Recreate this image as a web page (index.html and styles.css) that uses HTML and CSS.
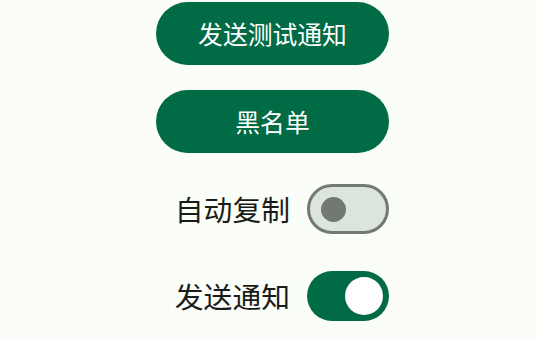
FILE: index.html
```html
<!DOCTYPE html>
<html lang="zh-CN">
<head>
<meta charset="utf-8">
<link rel="stylesheet" href="styles.css">
</head>
<body>
<div class="col">
  <button class="btn btn-first">发送测试通知</button>
  <button class="btn btn-second">黑名单</button>
  <div class="row row-first">
    <span class="label">自动复制</span>
    <span class="switch off"><span class="thumb"></span></span>
  </div>
  <div class="row row-second">
    <span class="label">发送通知</span>
    <span class="switch on"><span class="thumb"></span></span>
  </div>
</div>
</body>
</html>
```
FILE: styles.css
```css
html, body {
  margin: 0;
  padding: 0;
  background: #fafdf8;
}
body {
  width: 537px;
  height: 338px;
  overflow: hidden;
  font-family: "Noto Sans CJK SC", "Noto Sans", sans-serif;
}
.col {
  width: 233px;
  margin-left: 156px;
  padding-top: 1.5px;
  display: flex;
  flex-direction: column;
}
.btn {
  height: 63px;
  width: 233px;
  border: none;
  border-radius: 32px;
  background: #016b45;
  color: #ffffff;
  font-family: "Noto Sans CJK SC", "Noto Sans", sans-serif;
  font-size: 24.8px;
  font-weight: 400;
  padding: 0;
  display: flex;
  align-items: center;
  justify-content: center;
  line-height: 1;
}
.btn-second {
  margin-top: 25px;
}
.row {
  display: flex;
  align-items: center;
  justify-content: flex-end;
  gap: 17px;
  height: 50px;
}
.row-first {
  margin-top: 31.5px;
}
.row-second {
  margin-top: 37px;
}
.label {
  font-size: 28.8px;
  color: #1a1c19;
  line-height: 1;
}
.switch {
  position: relative;
  width: 82px;
  height: 50px;
  box-sizing: border-box;
  border-radius: 25px;
  flex: none;
}
.switch.off {
  background: #dce5dc;
  border: 3px solid #717970;
}
.switch.on {
  background: #016b45;
}
.thumb {
  position: absolute;
  border-radius: 50%;
}
.switch.off .thumb {
  width: 25px;
  height: 25px;
  left: 10.5px;
  top: 9.5px;
  background: #717970;
}
.switch.on .thumb {
  width: 38px;
  height: 38px;
  right: 6px;
  top: 6px;
  background: #ffffff;
}
```
